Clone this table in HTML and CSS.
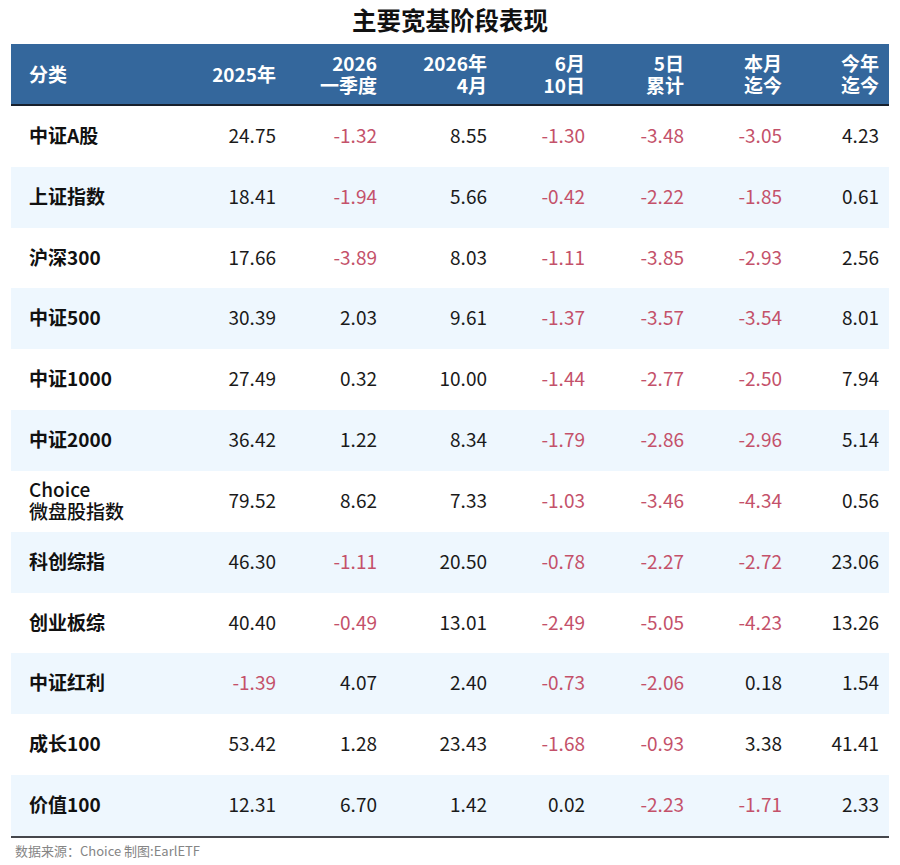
FILE: index.html
```html
<!DOCTYPE html>
<html lang="zh-CN">
<head>
<meta charset="utf-8">
<title>主要宽基阶段表现</title>
<link rel="stylesheet" href="styles.css">
</head>
<body>
<div class="page">
  <h1 class="title">主要宽基阶段表现</h1>
  <div class="table">
    <div class="row head">
      <div class="c name">分类</div>
      <div class="c">2025年</div>
      <div class="c">2026<br>一季度</div>
      <div class="c">2026年<br>4月</div>
      <div class="c">6月<br>10日</div>
      <div class="c">5日<br>累计</div>
      <div class="c">本月<br>迄今</div>
      <div class="c">今年<br>迄今</div>
    </div>
    <div class="row">
      <div class="c name">中证A股</div>
      <div class="c">24.75</div><div class="c neg">-1.32</div><div class="c">8.55</div><div class="c neg">-1.30</div><div class="c neg">-3.48</div><div class="c neg">-3.05</div><div class="c">4.23</div>
    </div>
    <div class="row alt">
      <div class="c name">上证指数</div>
      <div class="c">18.41</div><div class="c neg">-1.94</div><div class="c">5.66</div><div class="c neg">-0.42</div><div class="c neg">-2.22</div><div class="c neg">-1.85</div><div class="c">0.61</div>
    </div>
    <div class="row">
      <div class="c name">沪深300</div>
      <div class="c">17.66</div><div class="c neg">-3.89</div><div class="c">8.03</div><div class="c neg">-1.11</div><div class="c neg">-3.85</div><div class="c neg">-2.93</div><div class="c">2.56</div>
    </div>
    <div class="row alt">
      <div class="c name">中证500</div>
      <div class="c">30.39</div><div class="c">2.03</div><div class="c">9.61</div><div class="c neg">-1.37</div><div class="c neg">-3.57</div><div class="c neg">-3.54</div><div class="c">8.01</div>
    </div>
    <div class="row">
      <div class="c name">中证1000</div>
      <div class="c">27.49</div><div class="c">0.32</div><div class="c">10.00</div><div class="c neg">-1.44</div><div class="c neg">-2.77</div><div class="c neg">-2.50</div><div class="c">7.94</div>
    </div>
    <div class="row alt">
      <div class="c name">中证2000</div>
      <div class="c">36.42</div><div class="c">1.22</div><div class="c">8.34</div><div class="c neg">-1.79</div><div class="c neg">-2.86</div><div class="c neg">-2.96</div><div class="c">5.14</div>
    </div>
    <div class="row">
      <div class="c name two">Choice<br>微盘股指数</div>
      <div class="c">79.52</div><div class="c">8.62</div><div class="c">7.33</div><div class="c neg">-1.03</div><div class="c neg">-3.46</div><div class="c neg">-4.34</div><div class="c">0.56</div>
    </div>
    <div class="row alt">
      <div class="c name">科创综指</div>
      <div class="c">46.30</div><div class="c neg">-1.11</div><div class="c">20.50</div><div class="c neg">-0.78</div><div class="c neg">-2.27</div><div class="c neg">-2.72</div><div class="c">23.06</div>
    </div>
    <div class="row">
      <div class="c name">创业板综</div>
      <div class="c">40.40</div><div class="c neg">-0.49</div><div class="c">13.01</div><div class="c neg">-2.49</div><div class="c neg">-5.05</div><div class="c neg">-4.23</div><div class="c">13.26</div>
    </div>
    <div class="row alt">
      <div class="c name">中证红利</div>
      <div class="c neg">-1.39</div><div class="c">4.07</div><div class="c">2.40</div><div class="c neg">-0.73</div><div class="c neg">-2.06</div><div class="c">0.18</div><div class="c">1.54</div>
    </div>
    <div class="row">
      <div class="c name">成长100</div>
      <div class="c">53.42</div><div class="c">1.28</div><div class="c">23.43</div><div class="c neg">-1.68</div><div class="c neg">-0.93</div><div class="c">3.38</div><div class="c">41.41</div>
    </div>
    <div class="row alt">
      <div class="c name">价值100</div>
      <div class="c">12.31</div><div class="c">6.70</div><div class="c">1.42</div><div class="c">0.02</div><div class="c neg">-2.23</div><div class="c neg">-1.71</div><div class="c">2.33</div>
    </div>
  </div>
  <div class="source">数据来源：Choice 制图:EarlETF</div>
</div>
</body>
</html>
```
FILE: styles.css
```css
* { box-sizing: border-box; }
html, body { margin: 0; padding: 0; background: #ffffff; }
body {
  font-family: "Noto Sans CJK SC", "Noto Sans", sans-serif;
  color: #1a1a1a;
}
.page {
  width: 900px;
  height: 865px;
  padding: 0 11px;
}
.title {
  margin: 0;
  height: 44px;
  font-size: 24.5px;
  font-weight: 700;
  line-height: 40px;
  text-align: center;
  color: #111111;
}
.table {
  width: 878px;
  border-bottom: 2px solid #45474c;
}
.row {
  display: grid;
  grid-template-columns: 175px 100px 101px 110px 98px 99px 98px 97px;
  height: 60.83px;
  align-items: center;
  background: #ffffff;
}
.row.alt { background: #eef7fe; }
.row.head {
  height: 62px;
  background: #34679c;
  color: #ffffff;
  border-bottom: 2px solid #18202c;
  font-weight: 700;
}
.c {
  text-align: right;
  padding-right: 10px;
  padding-bottom: 3px;
  font-size: 19px;
  line-height: 22px;
  white-space: nowrap;
}
.head .c { font-size: 19px; line-height: 22px; padding-bottom: 1px; }
.c.name {
  text-align: left;
  padding-left: 18px;
  padding-right: 0;
  font-weight: 700;
  color: #111111;
}
.head .c.name { color: #ffffff; }
.c.name.two { font-weight: 500; line-height: 22px; }
.neg { color: #c4516a; }
.source {
  margin-top: 3px;
  padding-left: 4px;
  font-size: 13px;
  line-height: 20px;
  color: #858585;
}
```
